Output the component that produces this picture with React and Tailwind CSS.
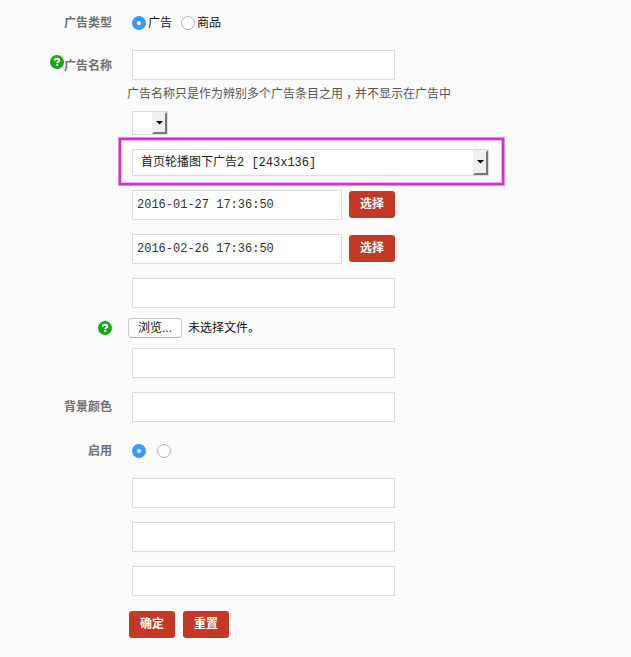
const help = (
  <svg className="h-[14px] w-[14px] shrink-0" viewBox="0 0 14 14">
    <circle cx="7" cy="7" r="7" fill="#16a80c" />
    <path d="M4.7 5.7C4.7 4.2 5.8 3.7 7 3.7s2.3.6 2.3 1.7c0 1.5-2.1 1.3-2.1 2.8" fill="none" stroke="#fff" strokeWidth="1.9" />
    <rect x="6.2" y="9.1" width="2" height="1.8" fill="#fff" />
  </svg>
);

function Row({ label, icon, children, className = "" }) {
  return (
    <div className={`flex items-center ${className}`}>
      <div className="mr-5 flex w-[112px] shrink-0 justify-end font-bold text-[#6f6f6f]">
        {icon}
        {label && <span className="h-[18px]">{label}</span>}
      </div>
      {children}
    </div>
  );
}

function Box({ value, className = "w-[263px]" }) {
  return (
    <div className={`flex h-[30px] items-center border border-[#dcdcdc] bg-white pl-1 font-['Liberation_Mono','Noto_Sans_CJK_SC',monospace] text-[#333] ${className}`}>
      {value}
    </div>
  );
}

function Radio({ checked }) {
  return checked ? (
    <span className="flex h-[14px] w-[14px] items-center justify-center rounded-full bg-[#3b99fc]">
      <span className="h-1 w-1 rounded-full bg-white" />
    </span>
  ) : (
    <span className="h-[14px] w-[14px] rounded-full border border-[#b0b0b0] bg-white" />
  );
}

function Button({ children }) {
  return <button className="h-[27px] w-[46px] rounded-[3px] bg-[#c43826] pb-px font-bold text-white">{children}</button>;
}

function Select({ value, className }) {
  return (
    <div className={`flex items-stretch justify-between border border-[#dcdcdc] bg-white ${className}`}>
      <span className="flex items-center whitespace-pre pt-0.5 pl-2 font-['Liberation_Mono','Noto_Sans_CJK_SC',monospace] text-[#222]">{value}</span>
      <span className="flex w-[15px] items-center justify-center border-2 border-t-[#f0f0f0] border-r-[#777] border-b-[#777] border-l-[#f0f0f0] bg-[#f0f0f0]">
        <svg className="h-1 w-[7px]" viewBox="0 0 7 4">
          <path d="M0 0h7L3.5 3.6z" fill="#000" />
        </svg>
      </span>
    </div>
  );
}

export default function App() {
  return (
    <main className="h-[657px] w-[631px] overflow-hidden bg-[#fcfcfc] font-['Liberation_Sans','Noto_Sans_CJK_SC',sans-serif] text-xs leading-[18px] text-[#111]">
      <Row label="广告类型" className="h-[46px]">
        <Radio checked />
        <span className="ml-0.5">广告</span>
        <span className="ml-[9px] flex"><Radio /></span>
        <span className="ml-0.5">商品</span>
      </Row>
      <Row label={<span className="inline-block pt-px">广告名称</span>} icon={<span className="mt-[-1px]">{help}</span>} className="mt-1 h-[30px]">
        <Box />
      </Row>
      <p className="mt-[5px] ml-[127px] h-[18px] text-[#555]">广告名称只是作为辨别多个广告条目之用<span className="px-[3px] [font-feature-settings:'halt']">，</span>并不显示在广告中</p>
      <Row className="mt-2 h-6">
        <Select className="h-6 w-9" />
      </Row>
      <div className="mt-[2px] ml-[118px] flex h-[49px] w-[387px] items-center border border-[#e08ae0] pt-px pl-[13px] shadow-[inset_0_0_0_2px_#cc33cc,inset_0_0_0_3px_#eeb4ee]">
        <Select className="h-[27px] w-[357px]" value="首页轮播图下广告2 [243x136]" />
      </div>
      <Row className="mt-1">
        <Box value="2016-01-27 17:36:50" className="mr-[7px] w-[210px]" />
        <span className="mb-0.5 flex"><Button>选择</Button></span>
      </Row>
      <Row className="mt-3.5">
        <Box value="2016-02-26 17:36:50" className="mr-[7px] w-[210px]" />
        <span className="mb-0.5 flex"><Button>选择</Button></span>
      </Row>
      <Row className="mt-3.5">
        <Box />
      </Row>
      <Row icon={help} className="h-10">
        <button className="-ml-1 h-5 w-[54px] rounded-[4px] border border-[#c8c8c8] border-b-[#aaa] bg-white leading-[17px]">浏览...</button>
        <span className="ml-1.5">未选择文件。</span>
      </Row>
      <Row>
        <Box />
      </Row>
      <Row label="背景颜色" className="mt-3.5">
        <Box />
      </Row>
      <Row label="启用" className="h-14 pt-0.5">
        <Radio checked />
        <span className="ml-[11px] flex"><Radio /></span>
      </Row>
      <Row>
        <Box />
      </Row>
      <Row className="mt-3.5">
        <Box />
      </Row>
      <Row className="mt-3.5">
        <Box />
      </Row>
      <div className="mt-[15px] ml-[129px] flex gap-2">
        <Button>确定</Button>
        <Button>重置</Button>
      </div>
    </main>
  );
}
